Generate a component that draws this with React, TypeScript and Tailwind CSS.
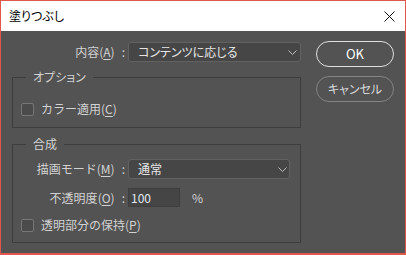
import React from "react";

const font = "font-['Noto_Sans_CJK_JP','Noto_Sans',sans-serif]";
const palt = "[font-feature-settings:'palt']";

function Key({ ch }: { ch: string }) {
  return (
    <>
      (<span className="underline underline-offset-2">{ch}</span>)
    </>
  );
}

function Chevron() {
  return (
    <svg width="9" height="5" viewBox="0 0 9 5" className="shrink-0">
      <polyline points="0.5,0.5 4.5,4.5 8.5,0.5" fill="none" stroke="#bdbdbd" strokeWidth="1" />
    </svg>
  );
}

function Select({ value, width, pr }: { value: string; width: string; pr: string }) {
  return (
    <div
      className={`ml-[3px] ${width} h-[20px] flex items-center rounded-[3px] border border-[#626262] bg-[#464646] pl-[9px] ${pr} text-[#e6e6e6] ${palt}`}
    >
      <span className="flex-1 leading-none">{value}</span>
      <Chevron />
    </div>
  );
}

function Label({ w, children }: { w: string; children: React.ReactNode }) {
  return (
    <div className={`${w} flex justify-end items-center text-[#d2d2d2]`}>
      <span>{children}</span>
      <span className="ml-[7px]">:</span>
    </div>
  );
}

function Check({ children, mt, mb }: { children: React.ReactNode; mt: string; mb: string }) {
  return (
    <div className={`flex items-center h-[16px] pl-[8px] ${mt} ${mb}`}>
      <span className="w-[13px] h-[13px] rounded-[2px] border border-[#777777] bg-[#4b4b4b]" />
      <span className="ml-[7px] text-[#d2d2d2]">{children}</span>
    </div>
  );
}

export default function App() {
  return (
    <div
      className={`w-[406px] h-[255px] flex flex-col border-x border-t border-b-2 border-[#e2574c] text-[12px] ${font}`}
    >
      <div className={`h-[30px] shrink-0 bg-white flex items-center justify-between pl-[8px] pr-[10px] text-black ${palt}`}>
        <span>塗りつぶし</span>
        <svg width="11" height="11" viewBox="0 0 11 11">
          <path d="M0.5 0.5 L10.5 10.5 M10.5 0.5 L0.5 10.5" stroke="#111" strokeWidth="1" />
        </svg>
      </div>

      <div className="flex-1 bg-[#535353] flex pl-[11px]">
        <div className="w-[289px] pt-[11px]">
          <div className="flex items-center h-[20px]">
            <Label w="w-[113px]">
              内容<Key ch="A" />
            </Label>
            <Select value="コンテンツに応じる" width="flex-1" pr="pr-[3px]" />
          </div>

          <fieldset className="mt-[7px] border border-[#3d3d3d]">
            <legend className={`ml-[13px] px-[7px] leading-[16px] text-[#d2d2d2] ${palt}`}>オプション</legend>
            <Check mt="mt-[16px]" mb="mb-[10px]">
              カラー適用<Key ch="C" />
            </Check>
          </fieldset>

          <fieldset className="mt-[8px] border border-[#3d3d3d]">
            <legend className={`ml-[13px] px-[7px] leading-[16px] text-[#d2d2d2] ${palt}`}>合成</legend>
            <div className="flex items-center h-[20px] mt-[7px]">
              <Label w="w-[112px]">
                描画モード<Key ch="M" />
              </Label>
              <Select value="通常" width="w-[162px]" pr="pr-[2px]" />
            </div>
            <div className="flex items-center h-[19px] mt-[9px]">
              <Label w="w-[112px]">
                不透明度<Key ch="O" />
              </Label>
              <div className="ml-[3px] w-[52px] h-[19px] flex items-center border border-[#3e3e3e] bg-[#454545] pl-[2px] text-[#e2eaf2]">
                100
              </div>
              <span className="ml-[12px] text-[#d2d2d2]">%</span>
            </div>
            <Check mt="mt-[10px]" mb="mb-[9px]">
              透明部分の保持<Key ch="P" />
            </Check>
          </fieldset>
        </div>

        <div className="ml-[15px] w-[78px] pt-[10px] flex flex-col gap-[9px]">
          <button className="h-[26px] rounded-full border-[1.5px] border-[#e0e0e0] text-[13px] text-white">
            OK
          </button>
          <button className={`h-[26px] rounded-full border border-[#858585] text-[12px] text-[#d8d8d8] ${palt}`}>
            キャンセル
          </button>
        </div>
      </div>
    </div>
  );
}
